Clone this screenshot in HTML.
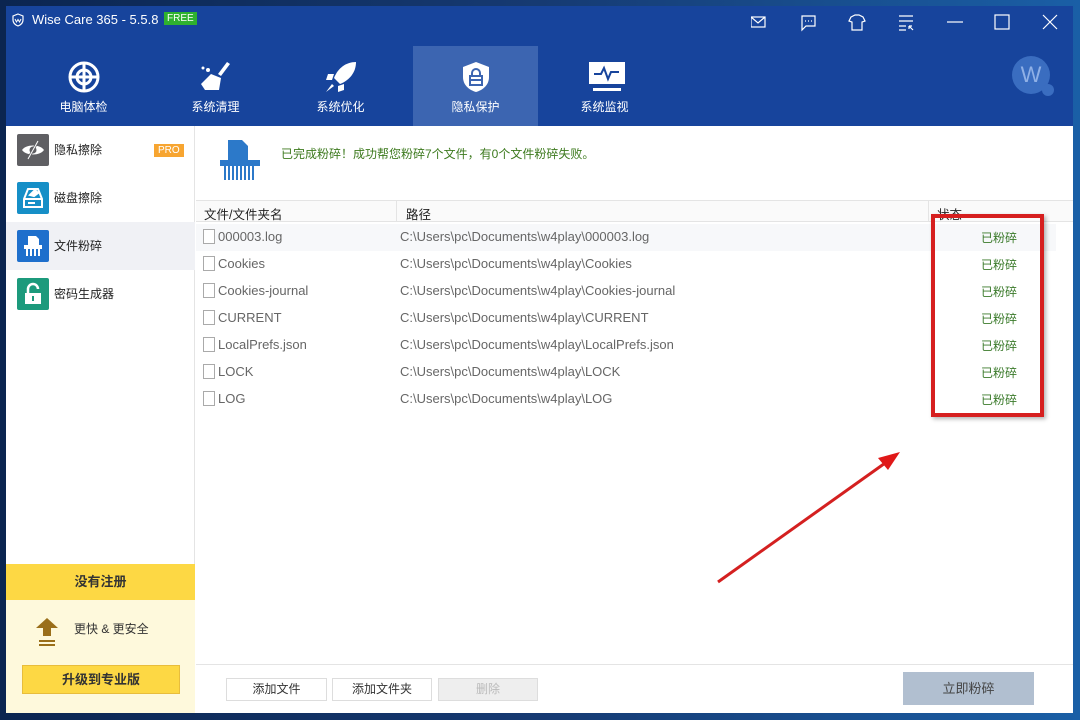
<!DOCTYPE html>
<html><head><meta charset="utf-8"><style>
*{margin:0;padding:0;box-sizing:border-box}
body{width:1080px;height:720px;overflow:hidden;position:relative;background:linear-gradient(90deg,#0b2550,#163a72 50%,#1a5fa6);font-family:"Liberation Sans","Noto Sans CJK SC",sans-serif;}
.win{position:absolute;left:6px;top:6px;width:1067px;height:707px;background:#fff;}
.top{position:absolute;left:0;top:0;width:1067px;height:120px;background:#17449c;color:#fff}
.title{position:absolute;left:26px;top:6px;font-size:13px}
.free{position:absolute;left:158px;top:6px;background:#2fb12f;color:#fff;font-size:10px;padding:1px 3px}
.tab{position:absolute;top:40px;width:125px;height:80px;text-align:center;font-size:12px}
.tab .lbl{position:absolute;top:52px;left:0;width:100%}
.tab svg{position:absolute;left:46px;top:14px}
.side{position:absolute;left:0;top:120px;width:189px;height:587px;background:#fff;border-right:1px solid #e4e4e4}
.si{position:absolute;left:0;width:189px;height:48px;font-size:12px;color:#222}
.si .ic{position:absolute;left:11px;top:8px;width:32px;height:32px;border-radius:2px}
.si .ic svg{position:absolute;left:0;top:0}
.si span{position:absolute;left:48px;top:15px}
.row{position:absolute;left:196px;height:27px;font-size:13px;color:#666;width:860px}
.row .f{position:absolute;left:22px;top:5px}
.row .p{position:absolute;left:204px;top:5px}
.row .s{position:absolute;left:785px;top:5px;color:#3a7a2a;font-size:12px}
.doc{position:absolute;left:7px;top:5px;width:12px;height:15px;border:1px solid #aaa;background:#fff}
.btn{position:absolute;top:672px;height:23px;border:1px solid #ddd;background:#fff;font-size:12px;text-align:center;line-height:21px;color:#333}
</style></head><body>
<div class="win">
<div class="top">
<svg style="position:absolute;left:5px;top:7px" width="14" height="14" viewBox="0 0 14 14"><path d="M7 1L12 3V7C12 10 9.5 12 7 13C4.5 12 2 10 2 7V3Z" fill="none" stroke="#fff" stroke-width="1.2"/><path d="M4 6L5.5 9L7 6.5L8.5 9L10 6" fill="none" stroke="#fff"/></svg>
<div class="title">Wise Care 365 - 5.5.8</div><div class="free">FREE</div>
<svg style="position:absolute;left:745px;top:8px" width="320" height="18" viewBox="0 0 320 18" fill="none" stroke="#fff" stroke-width="1.2">
<rect x="0" y="3" width="14" height="10"/><path d="M0 3L7 9L14 3"/>
<path d="M51 2H64V12H55L51 16Z"/><path d="M54 7h1M57 7h1M60 7h1"/>
<path d="M100 3L104 1H108L112 3L114 7L111 8V16H101V8L98 7Z"/>
<path d="M148 2H162M148 7H162M148 12H155M148 16H155M158 12L162 16M158 12H161M158 12V15"/>
<path d="M196 8H212"/><rect x="244" y="1" width="14" height="14"/><path d="M292 1L306 15M306 1L292 15"/>
</svg>
<div class="tab" style="left:15px"><svg width="34" height="34" viewBox="0 0 34 34" fill="none" stroke="#fff" stroke-width="3"><circle cx="17" cy="17" r="14"/><circle cx="17" cy="17" r="7"/><path d="M3 17H31M17 3V31"/></svg><div class="lbl">电脑体检</div></div>
<div class="tab" style="left:147px"><svg width="34" height="34" viewBox="0 0 34 34" fill="#fff"><path d="M28 2L31 4L22 16L19 14Z"/><path d="M12 14L22 18L20 30L6 30L2 24Z"/><circle cx="4" cy="8" r="1.5"/><circle cx="9" cy="10" r="2"/></svg><div class="lbl">系统清理</div></div>
<div class="tab" style="left:272px"><svg width="34" height="34" viewBox="0 0 34 34" fill="#fff"><path d="M32 2C22 2 14 8 10 18L16 24C26 20 32 12 32 2Z"/><path d="M10 14L4 14L2 20L8 20Z"/><path d="M20 24L20 30L14 32L14 26Z"/><path d="M8 24L2 32L10 26Z"/></svg><div class="lbl">系统优化</div></div>
<div class="tab" style="left:407px;background:#3c65b1"><svg width="34" height="34" viewBox="0 0 34 34"><path d="M17 2L30 7V17C30 25 24 30 17 32C10 30 4 25 4 17V7Z" fill="#fff"/><rect x="11" y="16" width="12" height="9" fill="none" stroke="#3c65b1" stroke-width="2"/><path d="M13 16V13A4 4 0 0 1 21 13V16M11 20H23" fill="none" stroke="#3c65b1" stroke-width="2"/></svg><div class="lbl">隐私保护</div></div>
<div class="tab" style="left:536px"><svg width="38" height="34" viewBox="0 0 38 34"><rect x="1" y="2" width="36" height="22" fill="#fff"/><path d="M6 14H13L16 8L20 19L23 12H31" fill="none" stroke="#17449c" stroke-width="2"/><rect x="5" y="28" width="28" height="3" fill="#fff"/></svg><div class="lbl">系统监视</div></div>
<div style="position:absolute;left:1006px;top:50px;width:38px;height:38px;border-radius:50%;background:#3a6dc0;color:#8fb0e6;font-size:22px;text-align:center;line-height:38px">W</div>
<div style="position:absolute;left:1036px;top:78px;width:12px;height:12px;border-radius:50%;background:#3a6dc0"></div>
</div>
<div class="side">
<div class="si" style="top:0"><div class="ic" style="background:#5f5f63"><svg width="32" height="32" viewBox="0 0 32 32"><path d="M5 16C9 10 23 10 27 16C23 22 9 22 5 16Z" fill="#fff"/><circle cx="16" cy="16" r="3.5" fill="#5f5f63"/><path d="M21 7L11 25" stroke="#5f5f63" stroke-width="2.5"/><path d="M21 7L11 25" stroke="#fff" stroke-width="1"/></svg></div><span>隐私擦除</span><div style="position:absolute;left:148px;top:18px;background:#f7a531;color:#fff;font-size:10px;padding:1px 4px">PRO</div></div>
<div class="si" style="top:48px"><div class="ic" style="background:#168fc7"><svg width="32" height="32" viewBox="0 0 32 32" fill="none" stroke="#fff" stroke-width="2"><path d="M7 17L11 7H21L25 17V25H7Z"/><path d="M7 17H25"/><path d="M11 21H18"/><path d="M13 13L18 8L21 11L17 14Z" fill="#fff"/></svg></div><span>磁盘擦除</span></div>
<div class="si" style="top:96px;background:#f0f1f5"><div class="ic" style="background:#1e6fcc"><svg width="32" height="32" viewBox="0 0 32 32" fill="#fff"><path d="M11 6H19L22 9V15H11Z"/><rect x="7" y="15" width="18" height="4"/><path d="M9 19h2v7H9zM13 19h2v7h-2zM17 19h2v7h-2zM21 19h2v7h-2z"/></svg></div><span>文件粉碎</span></div>
<div class="si" style="top:144px"><div class="ic" style="background:#1c9a7c"><svg width="32" height="32" viewBox="0 0 32 32"><path d="M11 15V11A5 5 0 0 1 21 11" fill="none" stroke="#fff" stroke-width="2.5"/><rect x="8" y="15" width="16" height="11" fill="#fff"/><rect x="15" y="18" width="2" height="5" fill="#1c9a7c"/></svg></div><span>密码生成器</span></div>
<div style="position:absolute;left:0;top:438px;width:189px;height:36px;background:#fdd844;text-align:center;line-height:36px;font-size:13px;font-weight:bold;color:#333">没有注册</div>
<div style="position:absolute;left:0;top:474px;width:189px;height:113px;background:#fef9dc">
<svg style="position:absolute;left:30px;top:18px" width="22" height="30" viewBox="0 0 22 30" fill="#9a6f1a"><path d="M11 0L22 10H15V18H7V10H0Z"/><rect x="3" y="22" width="16" height="2"/><rect x="3" y="26" width="16" height="2"/></svg>
<div style="position:absolute;left:68px;top:20px;font-size:12px;color:#333">更快 &amp; 更安全</div>
<div style="position:absolute;left:16px;top:65px;width:158px;height:29px;background:#fdd844;border:1px solid #e8bd3c;text-align:center;line-height:27px;font-size:13px;font-weight:bold;color:#333">升级到专业版</div>
</div>
</div>
<svg style="position:absolute;left:214px;top:134px" width="42" height="44" viewBox="0 0 42 44" fill="#2c79c9"><path d="M8 0H22L28 6V20H8Z"/><rect x="0" y="20" width="40" height="6"/><path d="M4 26h2v14h-2zM8 26h2v14h-2zM12 26h2v14h-2zM16 26h2v14h-2zM20 26h2v14h-2zM24 26h2v14h-2zM28 26h2v14h-2zM32 26h2v14h-2z"/></svg>
<div style="position:absolute;left:275px;top:139px;font-size:12px;color:#3d7a1e">已完成粉碎！成功帮您粉碎7个文件，有0个文件粉碎失败。</div>
<div style="position:absolute;left:190px;top:194px;width:877px;height:22px;background:#fafafa;border-top:1px solid #e4e4e4;border-bottom:1px solid #e4e4e4;font-size:12.5px;color:#222">
<span style="position:absolute;left:8px;top:3px">文件/文件夹名</span>
<div style="position:absolute;left:200px;top:0;height:21px;border-left:1px solid #e4e4e4"></div><span style="position:absolute;left:210px;top:3px">路径</span>
<div style="position:absolute;left:732px;top:0;height:21px;border-left:1px solid #e4e4e4"></div><span style="position:absolute;left:741px;top:3px">状态</span></div>
<div class="row" style="top:218px;left:190px;background:#f7f8fa"><div class="doc"></div><span class="f">000003.log</span><span class="p">C:\Users\pc\Documents\w4play\000003.log</span><span class="s">已粉碎</span></div>
<div class="row" style="top:245px;left:190px"><div class="doc"></div><span class="f">Cookies</span><span class="p">C:\Users\pc\Documents\w4play\Cookies</span><span class="s">已粉碎</span></div>
<div class="row" style="top:272px;left:190px"><div class="doc"></div><span class="f">Cookies-journal</span><span class="p">C:\Users\pc\Documents\w4play\Cookies-journal</span><span class="s">已粉碎</span></div>
<div class="row" style="top:299px;left:190px"><div class="doc"></div><span class="f">CURRENT</span><span class="p">C:\Users\pc\Documents\w4play\CURRENT</span><span class="s">已粉碎</span></div>
<div class="row" style="top:326px;left:190px"><div class="doc"></div><span class="f">LocalPrefs.json</span><span class="p">C:\Users\pc\Documents\w4play\LocalPrefs.json</span><span class="s">已粉碎</span></div>
<div class="row" style="top:353px;left:190px"><div class="doc"></div><span class="f">LOCK</span><span class="p">C:\Users\pc\Documents\w4play\LOCK</span><span class="s">已粉碎</span></div>
<div class="row" style="top:380px;left:190px"><div class="doc"></div><span class="f">LOG</span><span class="p">C:\Users\pc\Documents\w4play\LOG</span><span class="s">已粉碎</span></div>
<div style="position:absolute;left:925px;top:208px;width:113px;height:203px;border:4px solid #d61f1f;box-shadow:2px 2px 4px rgba(0,0,0,.3)"></div>
<div style="position:absolute;left:190px;top:658px;width:877px;border-top:1px solid #e4e4e4"></div>
<div class="btn" style="left:220px;width:101px">添加文件</div>
<div class="btn" style="left:326px;width:100px">添加文件夹</div>
<div class="btn" style="left:432px;width:100px;background:#eee;color:#bbb">删除</div>
<div style="position:absolute;left:897px;top:666px;width:131px;height:33px;background:#b1bfd0;color:#444;font-size:13px;text-align:center;line-height:33px">立即粉碎</div>
</div>
<svg style="position:absolute;left:0;top:0" width="1080" height="720"><line x1="718" y1="582" x2="888" y2="461" stroke="#d42020" stroke-width="3"/><path d="M900 452L878 458L888 470Z" fill="#e01818"/></svg>
</body></html>
